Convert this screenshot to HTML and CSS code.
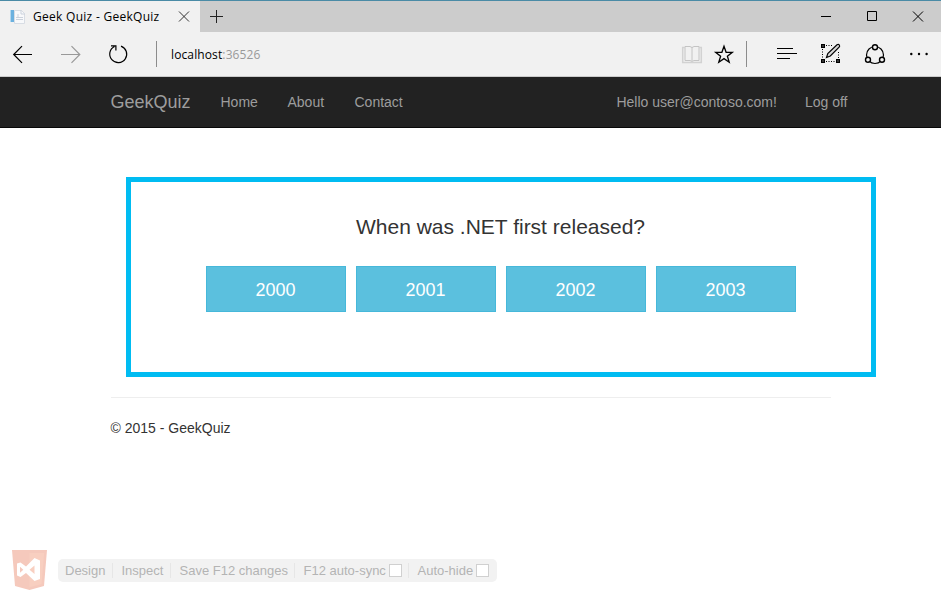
FILE: index.html
```html
<!DOCTYPE html>
<html lang="en">
<head>
<meta charset="utf-8">
<title>Geek Quiz - GeekQuiz</title>
<link rel="stylesheet" href="styles.css">
</head>
<body>
<div class="tabs">
  <div class="tab">
    <svg class="favicon" width="17" height="16" viewBox="0 0 17 16"><path d="M4.500 1.500h7l3 3v10h-10z" fill="#f8f9fb" stroke="#d8dde4"/><path d="M11 1v4h4M6 8.500h7M6 10.500h7M8 5v4" fill="none" stroke="#cbd2dc"/><path d="M0 1h4v12H0z" fill="#6bb1df"/><path d="M0 1h1v12H0z" fill="#b5d8ef"/></svg>
    <span class="tab-title">Geek Quiz - GeekQuiz</span>
    <svg class="tab-close" width="12" height="12" viewBox="0 0 12 12"><path d="M1 .5l10 10M11 .5L1 10.500" stroke="#333"/></svg>
  </div>
  <svg class="new-tab" width="14" height="14" viewBox="0 0 14 14"><path d="M6.500 0v13M0 6.500h13" stroke="#222"/></svg>
  <div class="window-controls">
    <svg width="12" height="12" viewBox="0 0 12 12"><path d="M1 5.500h10" stroke="#000"/></svg>
    <svg width="12" height="12" viewBox="0 0 12 12"><path d="M1.500 .5h9v9h-9z" fill="none" stroke="#000"/></svg>
    <svg width="12" height="12" viewBox="0 0 12 12"><path d="M1 .5l10 10M11 .5L1 10.500" stroke="#000"/></svg>
  </div>
</div>
<div class="toolbar">
  <div class="nav-buttons">
    <svg class="icon" viewBox="0 0 24 24"><path d="M2.500 12.500H21M11 4.200l-8.300 8.300 8.300 8.300" stroke-width="1.200"/></svg>
    <svg class="icon disabled" viewBox="0 0 24 24"><path d="M2 12.500h18.500M12.500 4.200l8.300 8.300-8.300 8.300" stroke-width="1.200"/></svg>
    <svg class="icon" viewBox="0 0 24 24"><path d="M14 4.100a8.500 8.500 0 1 1-6.500.4M4 3.800h4.900v4.800" stroke-width="1.200"/></svg>
  </div>
  <div class="divider"></div>
  <div class="address">localhost<span class="port">:36526</span></div>
  <div class="page-actions">
    <svg class="icon book" viewBox="0 0 24 24"><path d="M5 4.500h5l2 1 2-1h5v14h-5l-2 1-2-1H5zM12 5v14"/><path d="M5 5.500H2.700v15h18.600v-15H19" stroke-width="1.500" stroke="#d2d2d2"/></svg>
    <svg class="icon" viewBox="0 0 24 24"><path d="M12 4.300l2.100 6h6.200l-4.900 3.900 1.800 6-5.200-3.600-5.200 3.600 1.800-6-4.900-3.900h6.200z" stroke-width="1.300"/></svg>
  </div>
  <div class="divider"></div>
  <div class="browser-actions">
    <svg class="icon" viewBox="0 0 24 24"><path d="M2 6.500h16M2 11.500h20M2 16.500h13"/></svg>
    <svg class="icon" viewBox="0 0 24 24"><path d="M7 3.500h6M3.500 7v10M7 19.500h10M19.500 10v7" stroke-dasharray="1 1.500"/><path d="M2 2h4v4H2zM2 17h4v4H2zM17 17h4v4h-4z" fill="#000" stroke="none"/><path d="M3.500 3.500h1v1h-1zM3.500 18.500h1v1h-1zM18.500 18.500h1v1h-1z" fill="#ccc" stroke="none"/><path d="M7.500 15.500l1.300-4 9.200-8.700q1.500-.8 2.300.2t-.2 2.200L11.300 14z" fill="#d8d8d8" stroke-width="1.200"/></svg>
    <svg class="icon" viewBox="0 0 24 24"><circle cx="12" cy="13" r="8.500" stroke-width="1.200"/><g fill="#f1f1f1" stroke-width="1.400"><circle cx="12" cy="5.200" r="2.500"/><circle cx="5" cy="17.700" r="2.500"/><circle cx="19" cy="17.700" r="2.500"/></g></svg>
    <svg class="icon" viewBox="0 0 24 24"><g fill="#000" stroke="none"><circle cx="4.300" cy="12" r="1.200"/><circle cx="12" cy="12" r="1.200"/><circle cx="19.600" cy="12" r="1.200"/></g></svg>
  </div>
</div>
<nav class="navbar">
  <a class="brand">GeekQuiz</a>
  <a class="link home">Home</a>
  <a class="link about">About</a>
  <a class="link">Contact</a>
  <a class="link user">Hello user@contoso.com!</a>
  <a class="link">Log off</a>
</nav>
<main>
  <section class="quiz">
    <h1>When was .NET first released?</h1>
    <div class="answers">
      <button>2000</button>
      <button>2001</button>
      <button>2002</button>
      <button>2003</button>
    </div>
  </section>
  <footer>© 2015 - GeekQuiz</footer>
</main>
<div class="devbar">
  <svg class="vs-logo" width="36" height="41" viewBox="0 0 36 41"><path d="M0 0h35l-3 36-14.500 4L3 36z" fill="#f5c9bc"/><path d="M17.500 3h14.700l-2.600 31-12.100 3.300z" fill="#f8cfc0"/><path fill-rule="evenodd" d="M22.500 8l5.500 2.500v18.500L22.500 31 14 23l-5.500 4L5 25.500v-12L8.500 12.500 14 16.500zM22.500 15.500l-5 4.200 5 4.300zM8 16.800v6l3.300-3z" fill="#fff"/></svg>
  <div class="devmenu">
    <span class="item design">Design</span>
    <span class="item inspect">Inspect</span>
    <span class="item save">Save F12 changes</span>
    <span class="item sync">F12 auto-sync<i class="check"></i></span>
    <span class="item hide">Auto-hide<i class="check"></i></span>
  </div>
</div>
</body>
</html>
```
FILE: styles.css
```css
* { box-sizing: border-box; }
body {
  margin: 0;
  height: 602px;
  display: flex;
  flex-direction: column;
  overflow: hidden;
  background: #fff;
  color: #333;
  font: 14px/20px "Liberation Sans", Arial, sans-serif;
}
svg { display: block; flex: none; }
.tabs {
  height: 32px;
  flex: none;
  display: flex;
  align-items: center;
  background: #ccc;
  border-top: 1px solid #4a8ba6;
}
.tab {
  width: 200px;
  height: 31px;
  display: flex;
  align-items: center;
  padding-left: 10px;
  background: #f1f1f1;
  font: 12px/16px "Open Sans", sans-serif;
  color: #000;
}
.tab-title { width: 145px; margin-left: 6px; white-space: nowrap; letter-spacing: 0.28px; }
.new-tab { margin-left: 10px; }
.window-controls { display: flex; gap: 34px; margin-left: auto; margin-right: 17px; }
.toolbar {
  height: 45px;
  flex: none;
  display: flex;
  align-items: center;
  background: #f1f1f1;
  border-bottom: 1px solid #ccc;
}
.icon { width: 24px; height: 24px; fill: none; stroke: #000; }
.disabled { stroke: #999; }
.book { stroke: #c4c4c4; }
.nav-buttons { display: flex; gap: 24px; margin: 0 26px 0 11px; }
.nav-buttons + .divider { margin-left: -1px; }
.divider { width: 1px; height: 26px; background: #8c8c8c; }
.address { margin-left: 14px; padding-top: 2px; font: 12px/16px "Open Sans", sans-serif; letter-spacing: 0.12px; color: #000; }
.port { color: #999; }
.page-actions { display: flex; gap: 8px; margin: 0 10px 0 auto; }
.browser-actions { display: flex; gap: 20px; margin: 0 10px 0 28px; }
.navbar {
  height: 51px;
  flex: none;
  display: flex;
  align-items: center;
  padding: 0 93.500px 0 110.500px;
  background: #222;
  border-bottom: 1px solid #080808;
  color: #9d9d9d;
}
.brand { width: 110px; font-size: 18px; }
.home { width: 67px; }
.about { width: 67px; }
.user { margin: 0 28px 0 auto; }
main { padding: 49px 65px 0 111px; }
.quiz {
  height: 200px;
  margin-left: 15px;
  padding: 33px 75px 0;
  border: 5px solid #00bcf2;
}
h1 { margin: 0 1px 27px 0; font-size: 21px; font-weight: 400; line-height: 24px; text-align: center; white-space: nowrap; }
.answers { display: flex; gap: 10px; }
button {
  width: 140px;
  height: 46px;
  flex: none;
  padding: 1px 1px 0 0;
  border: 1px solid #46b8da;
  background: #5bc0de;
  color: #fff;
  font: 18px/24px "Liberation Sans", Arial, sans-serif;
}
footer { width: 720px; margin-top: 20px; padding-top: 20px; border-top: 1px solid #eee; text-indent: -0.500px; }
.devbar { display: flex; align-items: center; margin: auto 0 11px 12px; }
.devmenu {
  width: 439px;
  height: 23px;
  display: flex;
  align-items: center;
  margin-left: 10px;
  padding-left: 7px;
  border-radius: 5px;
  background: #f2f2f2;
  color: #b4b4b4;
  font-size: 13px;
  white-space: nowrap;
}
.item { height: 15px; display: flex; align-items: center; }
.item + .item { border-left: 1px solid #e6e6e6; padding-left: 8.500px; }
.design { width: 47px; }
.inspect { width: 58px; }
.save { width: 124px; }
.sync { width: 114px; }
.check { width: 13px; height: 13px; margin-left: 3px; border: 1px solid #d0d0d0; background: #fff; }
```
